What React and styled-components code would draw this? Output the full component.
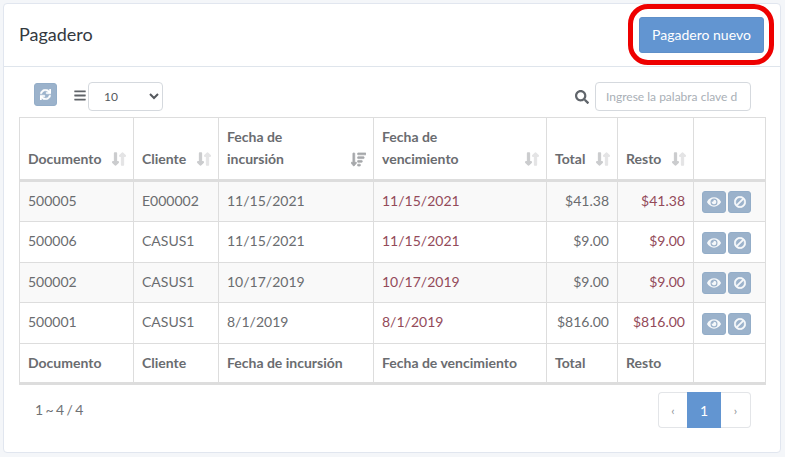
import React from "react";
import styled, { createGlobalStyle } from "styled-components";
import { FaSync, FaBars, FaSearch, FaEye, FaBan, FaLongArrowAltDown, FaLongArrowAltUp, FaSortAmountDown } from "react-icons/fa";

const Global = createGlobalStyle`
  html, body { margin: 0; padding: 0; background: #f4f6f9; }
  body { font-family: Lato, "Open Sans", sans-serif; color: #6a6c6f; width: 785px; height: 457px; overflow: hidden; }
  * { box-sizing: border-box; }
`;

const Page = styled.div`
  padding: 3px 4px 4px 3px;
  height: 457px;
`;
const Card = styled.section`
  position: relative;
  height: 450px;
  background: #fff;
  border: 1px solid #e1e6ef;
  border-radius: 4px;
`;
const Header = styled.header`
  height: 63px;
  padding: 13px 16px 0 15px;
  border-bottom: 1px solid #dfe5ec;
  display: flex;
  justify-content: space-between;
  align-items: flex-start;
`;
const Title = styled.h1`
  margin: 5px 0 0;
  font-size: 18px;
  line-height: 24px;
  font-weight: 400;
  color: #34393f;
`;
const PrimaryButton = styled.button`
  width: 125px;
  height: 36px;
  border: 1px solid #5e8fc9;
  border-radius: 3px;
  background: #6295d1;
  color: #fff;
  font: 400 14px/20px Lato, sans-serif;
  padding: 0;
`;
const Highlight = styled.div`
  position: absolute;
  left: 624px;
  top: 0;
  width: 146px;
  height: 61px;
  border: 5px solid #ee0000;
  border-radius: 20px;
  pointer-events: none;
`;
const Body = styled.div`
  padding: 15px 15px 0;
`;
const Toolbar = styled.div`
  display: flex;
  align-items: flex-start;
  height: 35px;
  padding: 0 14px 0 15px;
`;
const Refresh = styled.button`
  width: 23px;
  height: 23px;
  margin-top: 1px;
  border: 1px solid #93adc8;
  border-radius: 3px;
  background: #9bb2cb;
  color: #fff;
  padding: 0;
  display: flex;
  align-items: center;
  justify-content: center;
  font-size: 11px;
  svg { stroke: currentColor; stroke-width: 24; }
`;
const Bars = styled.span`
  margin: 7px 2px 0 17px;
  width: 12px;
  font-size: 13px;
  line-height: 13px;
  color: #5f6368;
  display: flex;
`;
const SelectBox = styled.select`
  width: 75px;
  height: 29px;
  border: 1px solid #d5d9de;
  border-radius: 4px;
  background: #fff;
  color: #55595e;
  font: 400 12px Lato, sans-serif;
  padding: 0 0 0 11px;
`;
const SearchGroup = styled.div`
  margin-left: auto;
  display: flex;
  align-items: flex-start;
`;
const SearchIcon = styled.span`
  display: flex;
  margin: 8px 6px 0 0;
  font-size: 14px;
  color: #60656b;
`;
const SearchInput = styled.input`
  width: 156px;
  height: 29px;
  border: 1px solid #d5d9de;
  border-radius: 4px;
  padding: 0 10px;
  font: 400 12px Lato, sans-serif;
  &::placeholder { color: #a9afb6; opacity: 1; }
`;
const Table = styled.table`
  width: 746px;
  border-collapse: collapse;
  table-layout: fixed;
  font-size: 14px;
  color: #6a6c6f;
  border-bottom: 3px solid #dddddd;
`;
const HeadCell = styled.th`
  position: relative;
  border: 1px solid #dddddd;
  border-bottom: 3px solid #dddddd;
  padding: 8px 8px 9px 8px;
  height: 63px;
  text-align: left;
  vertical-align: bottom;
  font-weight: 700;
  font-size: 14px;
  line-height: 22px;
  color: #6a6c70;
`;
const SortMark = styled.span`
  position: absolute;
  right: 7px;
  bottom: 12px;
  display: flex;
  font-size: 14px;
  svg { display: block; }
`;
const ArrowDown = styled(FaLongArrowAltDown)`
  width: 7px;
  height: 16px;
  color: #cbccce;
  stroke: currentColor;
  stroke-width: 40;
`;
const ArrowUp = styled(FaLongArrowAltUp)`
  width: 7px;
  height: 16px;
  color: #e4e4e5;
  stroke: currentColor;
  stroke-width: 40;
`;
const ActiveSort = styled(FaSortAmountDown)`
  width: 15px;
  height: 15px;
  color: #a6a8ab;
  stroke: currentColor;
  stroke-width: 24;
`;
const Row = styled.tr`
  background: ${p => p.$odd ? "#f9f9f9" : "#fff"};
`;
const Cell = styled.td`
  border: 1px solid #dddddd;
  height: ${p => p.$h}px;
  padding: 0 8px 3px 8px;
  text-align: ${p => p.$right ? "right" : "left"};
  color: ${p => p.$due ? "#934a59" : "#6a6c6f"};
  white-space: nowrap;
`;
const FootCell = styled.td`
  border: 1px solid #dddddd;
  height: 40px;
  padding: 0 8px 1px 8px;
  font-weight: 700;
  color: #6a6c70;
`;
const Actions = styled.div`
  display: flex;
  gap: 2px;
  margin-top: 4px;
`;
const ActionButton = styled.button`
  width: ${p => p.$w}px;
  height: 22px;
  border: 1px solid #93adc8;
  border-radius: 3px;
  background: #9bb2cb;
  color: rgba(255, 255, 255, 0.9);
  padding: 0;
  display: flex;
  align-items: center;
  justify-content: center;
  font-size: 13px;
`;
const EyeIcon = styled(FaEye)`
  width: 14px;
  height: 14px;
`;
const BanIcon = styled(FaBan)`
  width: 12px;
  height: 12px;
  transform: scaleX(-1);
  stroke: currentColor;
  stroke-width: 20;
`;
const Footer = styled.div`
  display: flex;
  justify-content: space-between;
  align-items: flex-start;
  padding: 7px 14px 0 16px;
`;
const Count = styled.div`
  margin-top: 9px;
  font-size: 14px;
  line-height: 18px;
  word-spacing: -1.2px;
  color: #6f7275;
`;
const Pager = styled.nav`
  display: flex;
  height: 36px;
`;
const PageLink = styled.span`
  width: ${p => p.$w}px;
  display: flex;
  align-items: center;
  justify-content: center;
  font-size: ${p => p.$current ? 14 : 12}px;
  color: ${p => p.$current ? "#fff" : "#8d9196"};
  background: ${p => p.$current ? "#6295d1" : "#fff"};
  border: ${p => p.$current ? "none" : "1px solid #e3e5e8"};
  border-left: ${p => p.$end === "r" || p.$current ? "none" : "1px solid #e3e5e8"};
  border-right: ${p => p.$end === "l" || p.$current ? "none" : "1px solid #e3e5e8"};
  border-radius: ${p => p.$end === "l" ? "4px 0 0 4px" : p.$end === "r" ? "0 4px 4px 0" : "0"};
`;

const cols = [114, 85, 155, 173, 71, 76, 72];
const heads = [
  ["Documento"],
  ["Cliente"],
  ["Fecha de", "incursión"],
  ["Fecha de", "vencimiento"],
  ["Total"],
  ["Resto"],
];
const foots = ["Documento", "Cliente", "Fecha de incursión", "Fecha de vencimiento", "Total", "Resto", ""];
const rows = [
  ["500005", "E000002", "11/15/2021", "11/15/2021", "$41.38", 41],
  ["500006", "CASUS1", "11/15/2021", "11/15/2021", "$9.00", 41],
  ["500002", "CASUS1", "10/17/2019", "10/17/2019", "$9.00", 40],
  ["500001", "CASUS1", "8/1/2019", "8/1/2019", "$816.00", 41],
];

const Sort = ({ active }) =>
  active ? (
    <SortMark><ActiveSort /></SortMark>
  ) : (
    <SortMark><ArrowDown /><ArrowUp /></SortMark>
  );

export default function App() {
  return (
    <Page>
      <Global />
      <Card>
        <Header>
          <Title>Pagadero</Title>
          <PrimaryButton>Pagadero nuevo</PrimaryButton>
        </Header>
        <Highlight />
        <Body>
          <Toolbar>
            <Refresh><FaSync /></Refresh>
            <Bars><FaBars /></Bars>
            <SelectBox defaultValue="10"><option>10</option><option>25</option></SelectBox>
            <SearchGroup>
              <SearchIcon><FaSearch /></SearchIcon>
              <SearchInput placeholder="Ingrese la palabra clave d" />
            </SearchGroup>
          </Toolbar>
          <Table>
            <colgroup>{cols.map((w, i) => <col key={i} style={{ width: w }} />)}</colgroup>
            <thead>
              <tr>
                {heads.map((h, i) => (
                  <HeadCell key={i}>
                    {h.map((l, j) => <div key={j}>{l}</div>)}
                    <Sort active={i === 2} />
                  </HeadCell>
                ))}
                <HeadCell />
              </tr>
            </thead>
            <tbody>
              {rows.map((r, i) => (
                <Row key={i} $odd={i % 2 === 0}>
                  <Cell $h={r[5]}>{r[0]}</Cell>
                  <Cell $h={r[5]}>{r[1]}</Cell>
                  <Cell $h={r[5]}>{r[2]}</Cell>
                  <Cell $h={r[5]} $due>{r[3]}</Cell>
                  <Cell $h={r[5]} $right>{r[4]}</Cell>
                  <Cell $h={r[5]} $right $due>{r[4]}</Cell>
                  <Cell $h={r[5]}>
                    <Actions>
                      <ActionButton $w={24}><EyeIcon /></ActionButton>
                      <ActionButton $w={23}><BanIcon /></ActionButton>
                    </Actions>
                  </Cell>
                </Row>
              ))}
            </tbody>
            <tfoot>
              <tr>{foots.map((f, i) => <FootCell key={i}>{f}</FootCell>)}</tr>
            </tfoot>
          </Table>
          <Footer>
            <Count>1 ~ 4 / 4</Count>
            <Pager>
              <PageLink $w={29} $end="l">‹</PageLink>
              <PageLink $w={34} $current>1</PageLink>
              <PageLink $w={30} $end="r">›</PageLink>
            </Pager>
          </Footer>
        </Body>
      </Card>
    </Page>
  );
}
